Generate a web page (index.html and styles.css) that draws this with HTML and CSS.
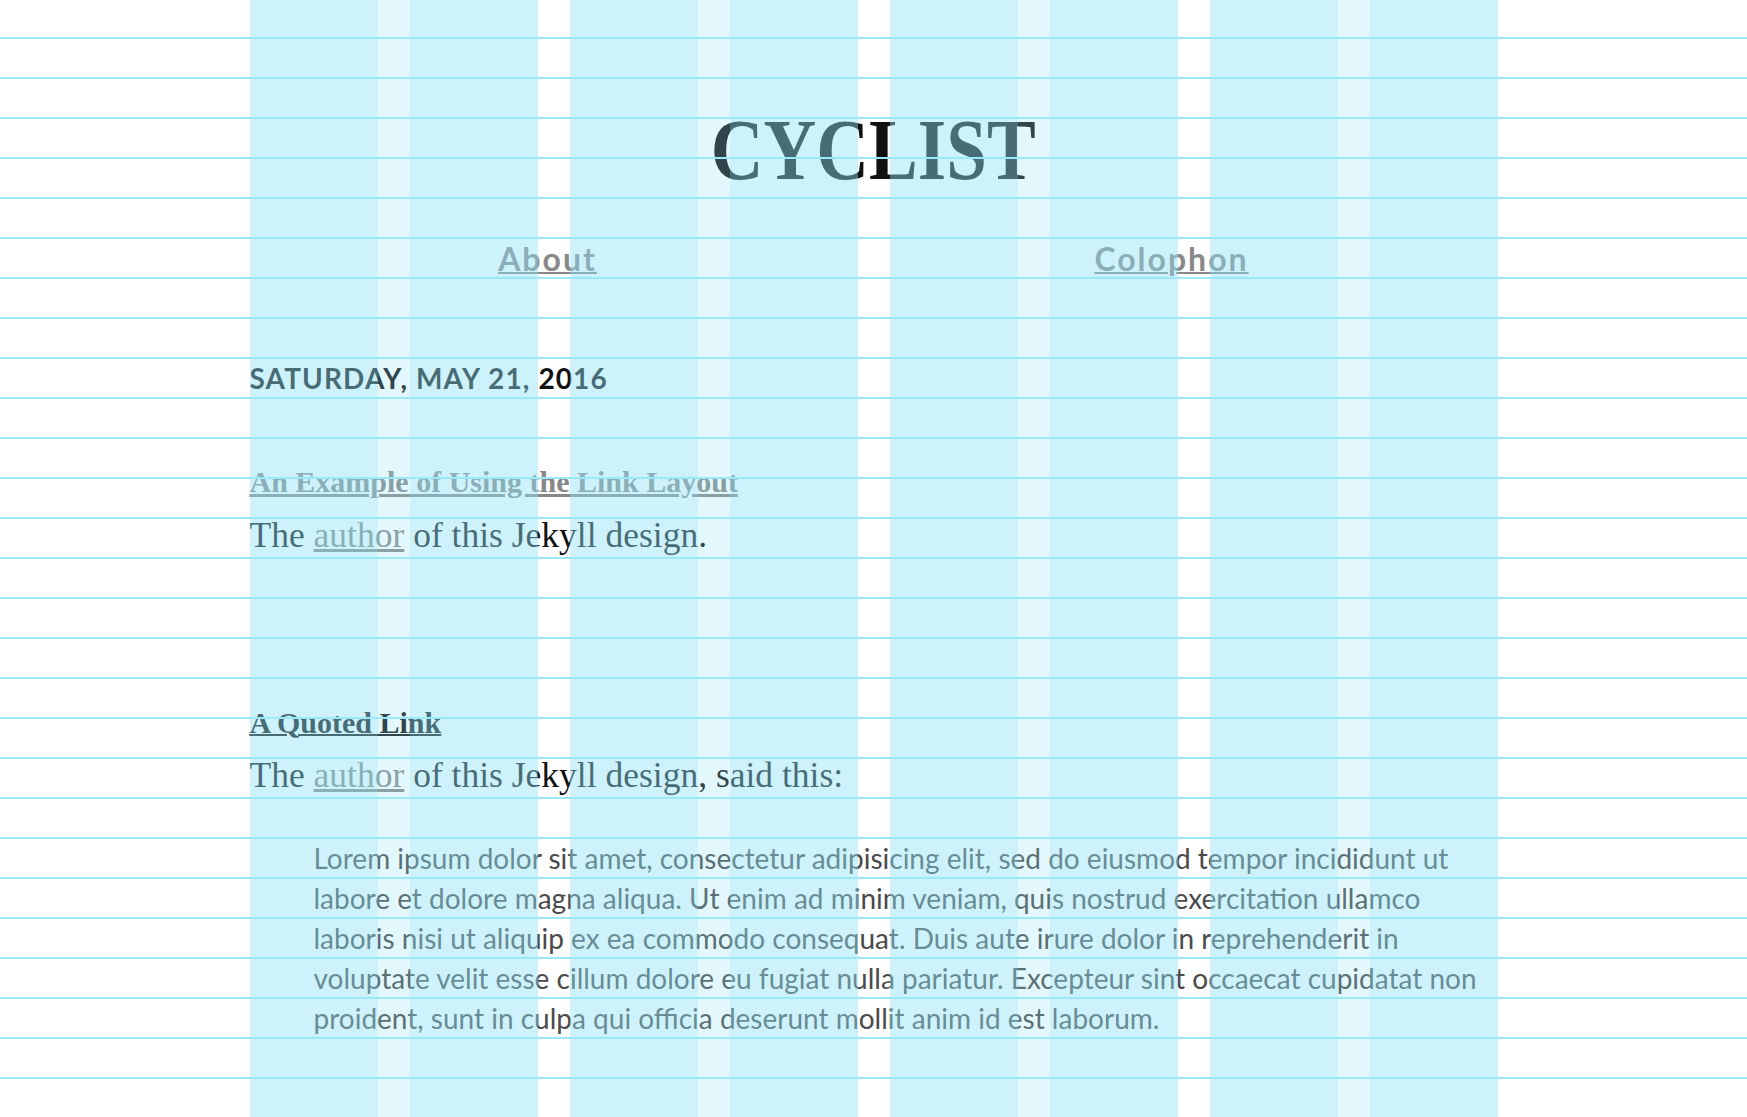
FILE: index.html
```html
<!DOCTYPE html>
<html lang="en">
<head>
<meta charset="utf-8">
<title>Cyclist</title>
<link rel="stylesheet" href="styles.css">
</head>
<body>
<div class="page">
  <header class="site-header">
    <h1 class="site-title"><span class="site-title__text">CYCLIST</span></h1>
    <nav class="site-nav">
      <div class="nav-item"><a class="nav-link" href="#">About</a></div>
      <div class="nav-item"><a class="nav-link" href="#">Colophon</a></div>
    </nav>
  </header>
  <main class="posts">
    <h2 class="post-date">SATURDAY, MAY 21, 2016</h2>
    <article class="post">
      <h3 class="post-title"><a class="post-title__link" href="#">An Example of Using the Link Layout</a></h3>
      <p class="post-text">The <a class="text-link" href="#">author</a> of this Jekyll design.</p>
    </article>
    <article class="post post--quote">
      <h3 class="post-title"><a class="post-title__link post-title__link--dark" href="#">A Quoted Link</a></h3>
      <p class="post-text">The <a class="text-link" href="#">author</a> of this Jekyll design, said this:</p>
      <blockquote class="post-quote">Lorem ipsum dolor sit amet, consectetur adipisicing elit, sed do eiusmod tempor incididunt ut labore et dolore magna aliqua. Ut enim ad minim veniam, quis nostrud exercitation ullamco laboris nisi ut aliquip ex ea commodo consequat. Duis aute irure dolor in reprehenderit in voluptate velit esse cillum dolore eu fugiat nulla pariatur. Excepteur sint occaecat cupidatat non proident, sunt in culpa qui officia deserunt mollit anim id est laborum.</blockquote>
    </article>
  </main>
</div>
<div class="grid-overlay" aria-hidden="true">
  <div class="grid-cols">
    <div class="grid-group"><div class="grid-col"></div><div class="grid-col"></div></div>
    <div class="grid-group"><div class="grid-col"></div><div class="grid-col"></div></div>
    <div class="grid-group"><div class="grid-col"></div><div class="grid-col"></div></div>
    <div class="grid-group"><div class="grid-col"></div><div class="grid-col"></div></div>
  </div>
  <div class="grid-rows"></div>
</div>
</body>
</html>
```
FILE: styles.css
```css
html, body {
  margin: 0;
  padding: 0;
  background: #ffffff;
}

body {
  color: #111111;
  font-family: "Liberation Serif", "Times New Roman", serif;
}

.page {
  width: 1248px;
  margin: 0 auto;
}

/* Header */
.site-header {
  padding-top: 110px;
}

.site-title {
  margin: 0;
  text-align: center;
  font-family: "Liberation Serif", "Times New Roman", serif;
  font-weight: 700;
  font-size: 86px;
  line-height: 80px;
  color: #111111;
}

.site-title__text {
  display: inline-block;
  transform: scaleX(0.85);
}

.site-nav {
  display: flex;
  margin-top: 49px;
}

.nav-item {
  width: 50%;
  box-sizing: border-box;
  padding-right: 28px;
  text-align: center;
  font-family: Lato, "Open Sans", sans-serif;
  font-weight: 700;
  font-size: 32px;
  line-height: 40px;
  letter-spacing: 2px;
}

.nav-link {
  color: #888888;
  text-decoration-thickness: 2px;
}

/* Posts */
.post-date {
  margin: 79px 0 0;
  font-family: Lato, "Open Sans", sans-serif;
  font-weight: 700;
  font-size: 28px;
  line-height: 40px;
  letter-spacing: 0.04em;
  color: #111111;
}

.post {
  margin-top: 64px;
}

.post--quote {
  margin-top: 148px;
}

.post-title {
  margin: 0;
  font-family: "Liberation Serif", "Times New Roman", serif;
  font-weight: 700;
  font-size: 30px;
  line-height: 40px;
}

.post-title__link {
  color: #888888;
}

.post-title__link--dark {
  color: #111111;
  text-decoration-thickness: 2px;
}

.post-text {
  margin: 13px 0 0;
  font-family: "Liberation Serif", "Times New Roman", serif;
  font-size: 35.5px;
  line-height: 40px;
  color: #111111;
}

.text-link {
  color: #888888;
}

.post--quote .post-text {
  margin-top: 12px;
}

.post-quote {
  margin: 43px 0 0 64px;
  font-family: Lato, "Open Sans", sans-serif;
  font-size: 28px;
  line-height: 40px;
  color: #4a4a4a;
}

/* Grid overlay (sits above the content) */
.grid-overlay {
  position: fixed;
  inset: 0;
  pointer-events: none;
}

.grid-cols {
  width: 1248px;
  height: 100%;
  margin: 0 auto;
  display: flex;
  gap: 32px;
}

.grid-group {
  width: 288px;
  display: flex;
  gap: 32px;
  background: rgba(144, 228, 247, 0.25);
}

.grid-col {
  width: 128px;
  background: rgba(144, 228, 247, 0.25);
}

.grid-rows {
  position: absolute;
  inset: 0;
  background-image: repeating-linear-gradient(
    to bottom,
    transparent 0,
    transparent 37px,
    #9ae8f9 37px,
    #9ae8f9 39px,
    transparent 39px,
    transparent 40px
  );
}
```
